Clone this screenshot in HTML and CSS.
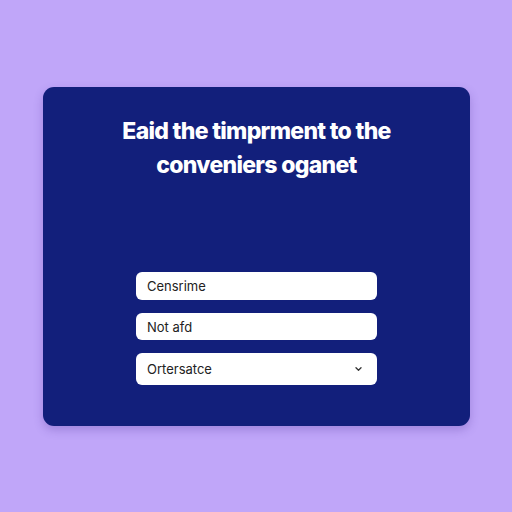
FILE: index.html
```html
<!DOCTYPE html>
<html>
<head>
<meta charset="utf-8">
<link rel="stylesheet" href="styles.css">
</head>
<body>
<div class="page">
  <div class="card">
    <h1 class="title">Eaid the timprment to the<br>conveniers oganet</h1>
    <div class="fields">
      <div class="field f1">Censrime</div>
      <div class="field f2">Not afd</div>
      <div class="field f3"><span>Ortersatce</span>
        <svg class="chev" width="7" height="4" viewBox="0 0 7 4"><path d="M1 0.8l2.5 2.4 2.5-2.4" fill="none" stroke="#333" stroke-width="1.3" stroke-linecap="round" stroke-linejoin="round"/></svg>
      </div>
    </div>
  </div>
</div>
</body>
</html>
```
FILE: styles.css
```css
html, body { margin: 0; padding: 0; }
body { background: #c0a6f9; font-family: Inter, "Noto Sans", sans-serif; }
.page { width: 512px; height: 512px; padding-top: 87px; box-sizing: border-box; display: flex; justify-content: center; }
.card {
  width: 427px; height: 339px; box-sizing: border-box;
  margin-left: 1px;
  background: #121f7b; border-radius: 11px;
  box-shadow: 0 4px 10px rgba(60, 30, 140, 0.25);
  display: flex; flex-direction: column; align-items: center;
  padding-top: 27px;
}
.title {
  margin: 0; color: #fff; font-weight: 800; font-size: 23px;
  line-height: 34px; text-align: center; letter-spacing: -0.7px;
}
.fields { margin-top: 90px; width: 241px; display: flex; flex-direction: column; gap: 13px; }
.field {
  background: #fff; border-radius: 6px; box-sizing: border-box;
  padding-left: 11px; display: flex; align-items: center;
  font-size: 13px; color: #222; font-weight: 400;
}
.f1 { height: 28px; }
.f2 { height: 27px; }
.f3 { height: 32px; justify-content: space-between; padding-right: 15px; }
.chev { display: block; }
```
